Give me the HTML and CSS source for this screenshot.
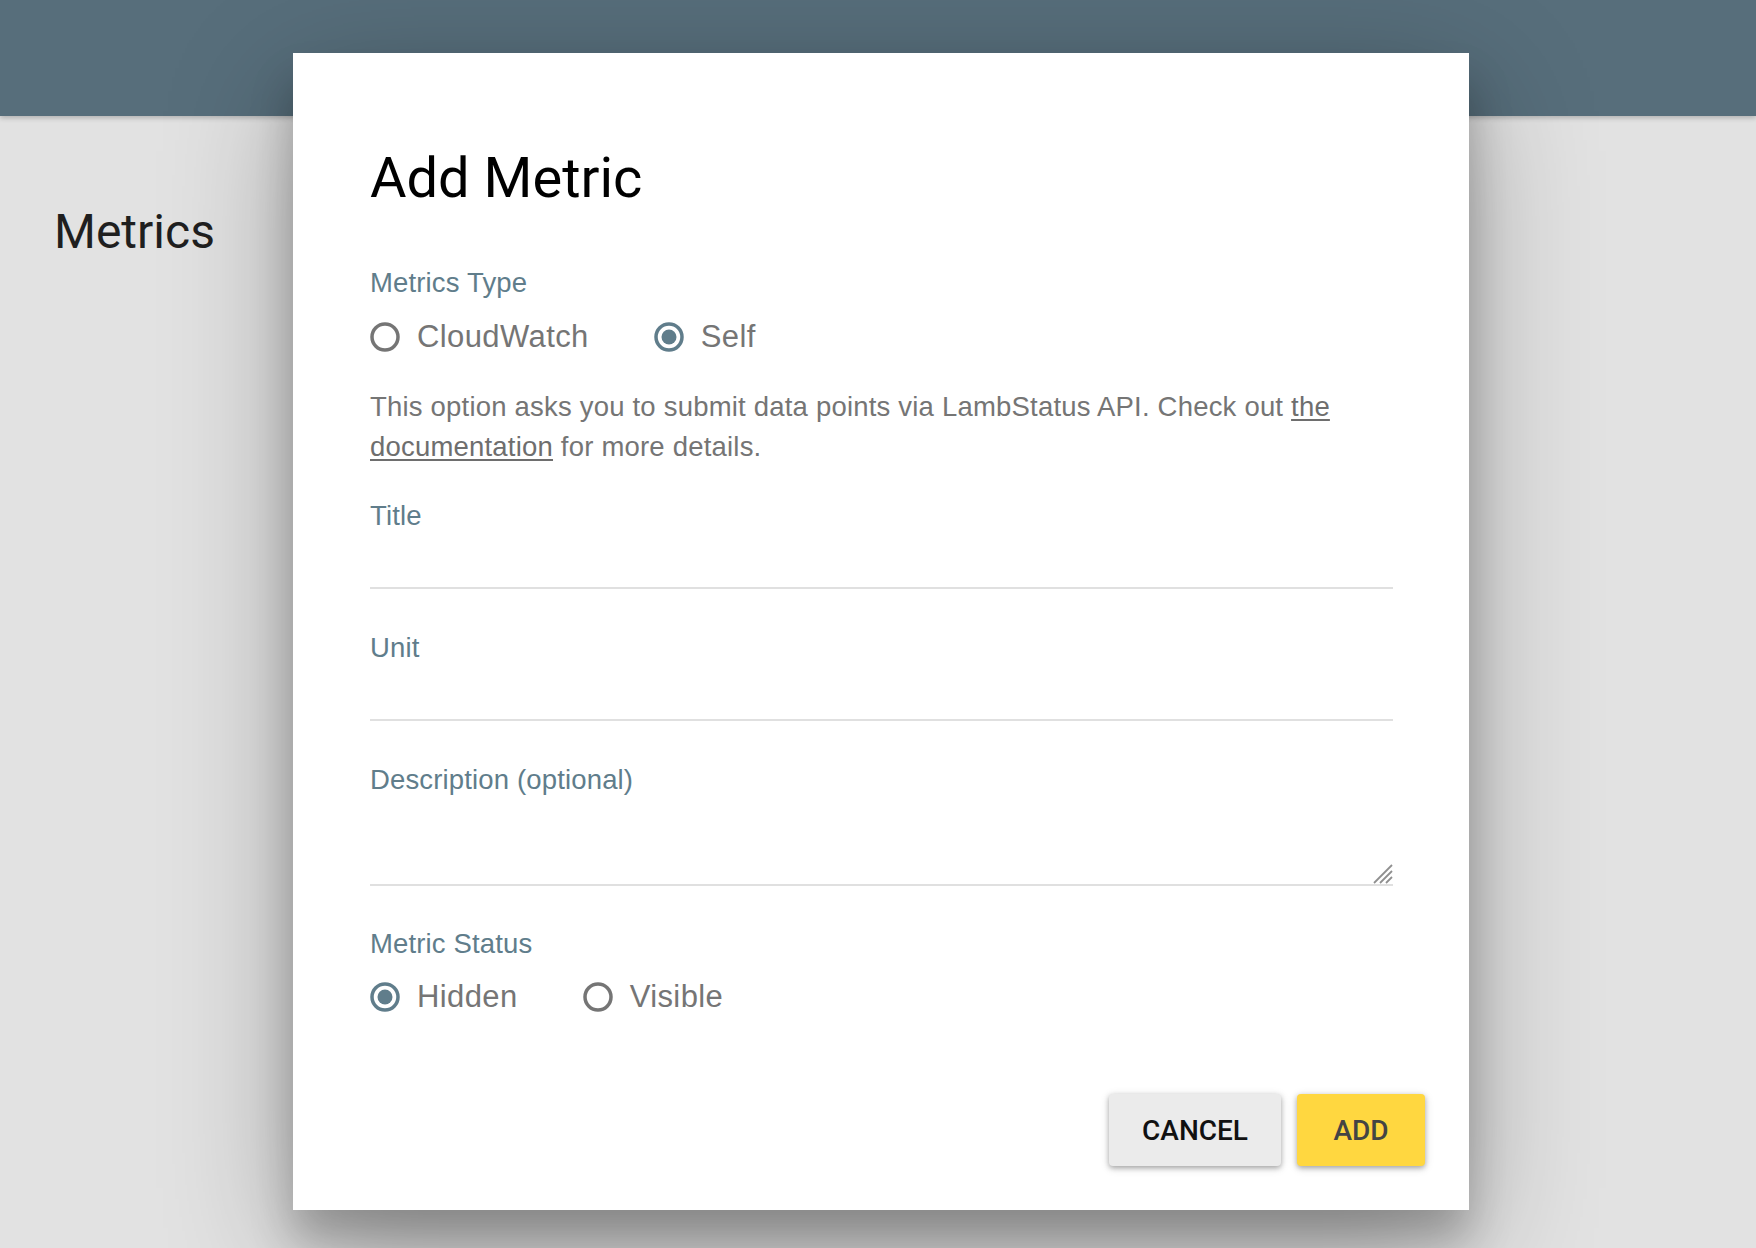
FILE: index.html
```html
<!DOCTYPE html>
<html lang="en">
<head>
<meta charset="utf-8">
<title>Add Metric</title>
<link rel="stylesheet" href="styles.css">
</head>
<body>
<header class="appbar"></header>
<main class="page">
  <h1 class="page-title">Metrics</h1>
</main>

<div class="dialog" role="dialog" aria-label="Add Metric">
  <div class="dialog-body">
    <h2 class="dialog-title">Add Metric</h2>

    <div class="field field-type">
      <div class="field-label">Metrics Type</div>
      <div class="radio-row radio-row-type">
        <label class="radio">
          <svg class="radio-dot" width="30" height="30" viewBox="0 0 30 30"><circle cx="15" cy="15" r="13" fill="none" stroke="#757575" stroke-width="3.5"/></svg>
          <span class="radio-text">CloudWatch</span>
        </label>
        <label class="radio">
          <svg class="radio-dot" width="30" height="30" viewBox="0 0 30 30"><circle cx="15" cy="15" r="13" fill="none" stroke="#607d8b" stroke-width="3.5"/><circle cx="15" cy="15" r="7.5" fill="#607d8b"/></svg>
          <span class="radio-text">Self</span>
        </label>
      </div>
    </div>

    <p class="help">This option asks you to submit data points via LambStatus API. Check out <a href="#" class="help-link">the documentation</a> for more details.</p>

    <div class="field field-title">
      <div class="field-label">Title</div>
      <div class="input-line"></div>
    </div>

    <div class="field field-unit">
      <div class="field-label">Unit</div>
      <div class="input-line"></div>
    </div>

    <div class="field field-desc">
      <div class="field-label">Description (optional)</div>
      <div class="textarea-line">
        <svg class="resize-grip" width="22" height="22" viewBox="0 0 22 22">
          <line x1="3" y1="21" x2="21" y2="3" stroke="#8f8f8f" stroke-width="1.8"/>
          <line x1="9" y1="21" x2="21" y2="9" stroke="#8f8f8f" stroke-width="1.8"/>
          <line x1="15" y1="21" x2="21" y2="15" stroke="#8f8f8f" stroke-width="1.8"/>
        </svg>
      </div>
    </div>

    <div class="field field-status">
      <div class="field-label">Metric Status</div>
      <div class="radio-row radio-row-status">
        <label class="radio">
          <svg class="radio-dot" width="30" height="30" viewBox="0 0 30 30"><circle cx="15" cy="15" r="13" fill="none" stroke="#607d8b" stroke-width="3.5"/><circle cx="15" cy="15" r="7.5" fill="#607d8b"/></svg>
          <span class="radio-text">Hidden</span>
        </label>
        <label class="radio">
          <svg class="radio-dot" width="30" height="30" viewBox="0 0 30 30"><circle cx="15" cy="15" r="13" fill="none" stroke="#757575" stroke-width="3.5"/></svg>
          <span class="radio-text">Visible</span>
        </label>
      </div>
    </div>
  </div>

  <div class="dialog-actions">
    <button class="btn btn-cancel" type="button">CANCEL</button>
    <button class="btn btn-add" type="button">ADD</button>
  </div>
</div>
</body>
</html>
```

FILE: styles.css
```css
html, body {
  margin: 0;
  padding: 0;
}

body {
  background: #e2e2e2;
  width: 1756px;
  height: 1248px;
  overflow: hidden;
  position: relative;
  font-family: "Liberation Sans", Arial, sans-serif;
}

.appbar {
  height: 116px;
  background: #576e7b;
  box-shadow: 0 2px 5px rgba(0, 0, 0, 0.22);
  position: relative;
  z-index: 1;
}

.page {
  padding: 88px 0 0 54px;
}

.page-title {
  margin: 0;
  font-family: Roboto, "Liberation Sans", sans-serif;
  font-weight: 400;
  font-size: 48px;
  line-height: 56px;
  color: #1f1f1f;
}

.dialog {
  position: absolute;
  left: 293px;
  top: 53px;
  width: 1176px;
  height: 1157px;
  background: #ffffff;
  display: flex;
  flex-direction: column;
  z-index: 2;
  box-shadow: 0 38px 120px rgba(0, 0, 0, 0.30), 0 30px 40px rgba(0, 0, 0, 0.22);
}

.dialog-body {
  padding: 93px 76px 0 77px;
}

.dialog-title {
  margin: 0;
  font-family: Roboto, "Liberation Sans", sans-serif;
  font-weight: 400;
  font-size: 56px;
  line-height: 64px;
  color: #000000;
}

.field-label {
  font-size: 27.5px;
  line-height: 32px;
  letter-spacing: 0.15px;
  color: #607d8b;
}

.field-type {
  margin-top: 57px;
}

.radio-row {
  display: flex;
  align-items: center;
  height: 40px;
}

.radio-row-type {
  margin-top: 18px;
}

.radio-row-status {
  margin-top: 17px;
}

.radio {
  display: flex;
  align-items: center;
  gap: 17px;
  margin-right: 65px;
}

.radio-dot {
  display: block;
  flex: none;
}

.radio-text {
  font-size: 31px;
  line-height: 40px;
  letter-spacing: 0.4px;
  color: #757575;
}

.help {
  margin: 30px 0 0;
  font-size: 27.5px;
  line-height: 40px;
  letter-spacing: 0.2px;
  color: #757575;
}

.help-link {
  color: #6e6e6e;
  text-decoration: underline;
  text-underline-offset: 3px;
}

.field-title {
  margin-top: 33px;
}

.field-unit,
.field-desc {
  margin-top: 43px;
}

.field-status {
  margin-top: 42px;
}

.input-line {
  height: 55px;
  border-bottom: 2px solid #e0e0e0;
}

.textarea-line {
  height: 88px;
  border-bottom: 2px solid #e0e0e0;
  display: flex;
  justify-content: flex-end;
  align-items: flex-end;
}

.resize-grip {
  display: block;
}

.dialog-actions {
  margin-top: auto;
  padding: 0 44px 44px;
  display: flex;
  justify-content: flex-end;
  gap: 16px;
}

.btn {
  height: 72px;
  min-width: 128px;
  padding: 0 33px;
  border: none;
  border-radius: 4px;
  font-family: Roboto, "Liberation Sans", sans-serif;
  font-weight: 500;
  font-size: 28px;
  box-shadow: 0 2px 10px rgba(0, 0, 0, 0.16), 0 2px 5px rgba(0, 0, 0, 0.26);
}

.btn-cancel {
  background: #ebebeb;
  color: #111111;
}

.btn-add {
  background: #ffd740;
  color: #444444;
}
```
